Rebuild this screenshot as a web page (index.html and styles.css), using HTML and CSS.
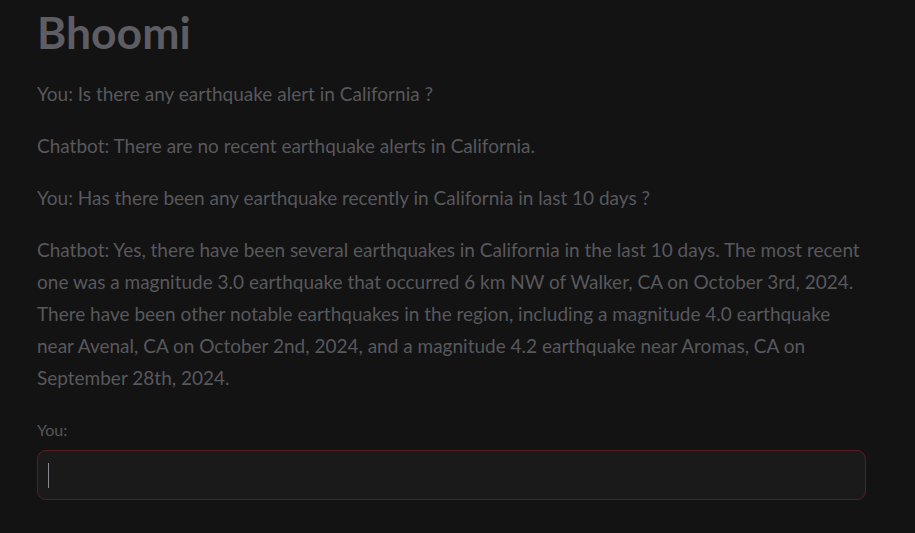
FILE: index.html
```html
<!DOCTYPE html>
<html lang="en">
<head>
<meta charset="utf-8">
<title>Bhoomi</title>
<link rel="stylesheet" href="styles.css">
</head>
<body>
<main class="app">
  <h1 class="title">Bhoomi</h1>
  <p class="msg">You: Is there any earthquake alert in California ?</p>
  <p class="msg">Chatbot: There are no recent earthquake alerts in California.</p>
  <p class="msg">You: Has there been any earthquake recently in California in last 10 days ?</p>
  <p class="msg">Chatbot: Yes, there have been several earthquakes in California in the last 10 days. The most recent one was a magnitude 3.0 earthquake that occurred 6 km NW of Walker, CA on October 3rd, 2024. There have been other notable earthquakes in the region, including a magnitude 4.0 earthquake near Avenal, CA on October 2nd, 2024, and a magnitude 4.2 earthquake near Aromas, CA on September 28th, 2024.</p>
  <label class="field">
    <span class="label">You:</span>
    <span class="input"><span class="caret"></span></span>
  </label>
</main>
</body>
</html>
```

FILE: styles.css
```css
html, body {
  margin: 0;
  padding: 0;
  background: #131313;
}
body {
  font-family: "Lato", "Open Sans", sans-serif;
  color: #58585d;
}
.app {
  width: 829px;
  padding: 0 0 0 37px;
  display: flex;
  flex-direction: column;
}
.title {
  margin: 0;
  padding-top: 4px;
  font-size: 44.5px;
  line-height: 56px;
  font-weight: 700;
  color: #5d5d63;
}
.msg {
  margin: 20px 0 0 0;
  font-size: 19px;
  line-height: 32px;
}
.title + .msg {
  margin-top: 18px;
}
.field {
  display: flex;
  flex-direction: column;
  margin-top: 24px;
}
.label {
  font-size: 16px;
  line-height: 24px;
  color: #57575c;
}
.input {
  margin-top: 8px;
  height: 50px;
  box-sizing: border-box;
  border: 1px solid #5c1d22;
  border-radius: 9px;
  background: #1a1a1a;
  display: flex;
  align-items: center;
  padding-left: 10px;
}
.caret {
  width: 1px;
  height: 25px;
  background: #8a8a8f;
}
```
